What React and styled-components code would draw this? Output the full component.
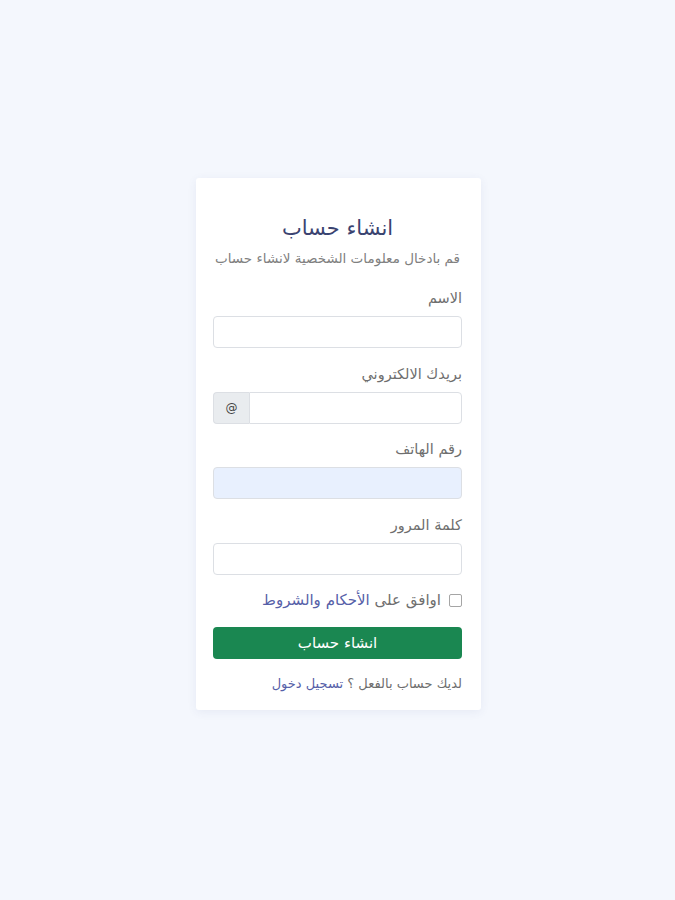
import React from "react";
import styled, { createGlobalStyle } from "styled-components";

const Global = createGlobalStyle`
  html, body { margin: 0; padding: 0; }
  body {
    background: #f4f7fd;
    font-family: "DejaVu Sans", "Noto Sans", sans-serif;
  }
  * { box-sizing: border-box; }
`;

const Page = styled.div`
  min-height: 900px;
  display: flex;
  justify-content: center;
  padding-top: 178px;
  padding-left: 2px;
`;

const Card = styled.form`
  width: 285px;
  height: 532px;
  background: #fff;
  box-shadow: 0 2px 10px rgba(60, 80, 140, 0.08);
  border-radius: 3px;
  padding: 36px 19px 0 17px;
  direction: rtl;
  display: flex;
  flex-direction: column;
`;

const Title = styled.h1`
  margin: 0;
  text-align: center;
  font-size: 21px;
  font-weight: 400;
  color: #3a4370;
  line-height: 28px;
`;

const Subtitle = styled.p`
  margin: 7px 0 22px;
  text-align: center;
  font-size: 13.5px;
  color: #808080;
  line-height: 18px;
  white-space: nowrap;
`;

const Field = styled.div`
  display: flex;
  flex-direction: column;
  margin-bottom: 16.5px;
`;

const Label = styled.label`
  font-size: 14.5px;
  color: #6e6e6e;
  line-height: 18px;
  margin-bottom: 9px;
`;

const Input = styled.input`
  height: 32px;
  width: 100%;
  border: 1px solid #dcdfe4;
  border-radius: 4px;
  background: ${(p) => (p.$filled ? "#e8f0fe" : "#fff")};
  padding: 0 10px;
  font-family: inherit;
  outline: none;
`;

const Group = styled.div`
  display: flex;
  direction: ltr;
  height: 32px;
`;

const Addon = styled.span`
  width: 36px;
  display: flex;
  align-items: center;
  justify-content: center;
  background: #e9ecef;
  border: 1px solid #dcdfe4;
  border-right: none;
  border-radius: 4px 0 0 4px;
  font-size: 12px;
  color: #444;
`;

const GroupInput = styled(Input)`
  flex: 1;
  border-radius: 0 4px 4px 0;
`;

const CheckRow = styled.div`
  display: flex;
  align-items: center;
  gap: 6px;
  font-size: 15px;
  color: #6e6e6e;
  line-height: 18px;
  white-space: nowrap;
`;

const Box = styled.span`
  width: 13px;
  height: 13px;
  border: 1px solid #a5a5a5;
  border-radius: 2px;
  margin-left: 2px;
`;

const Link = styled.a`
  color: #5660a8;
  text-decoration: none;
`;

const Button = styled.button`
  margin-top: 18px;
  height: 32px;
  width: 100%;
  border: none;
  border-radius: 4px;
  background: #1a8751;
  color: #fff;
  font-family: inherit;
  font-size: 15px;
`;

const Footer = styled.p`
  margin: 16px 0 0;
  font-size: 13px;
  color: #6e6e6e;
  line-height: 18px;
  white-space: nowrap;
`;

export default function App() {
  return (
    <>
      <Global />
      <Page>
        <Card>
          <Title>انشاء حساب</Title>
          <Subtitle>قم بادخال معلومات الشخصية لانشاء حساب</Subtitle>
          <Field>
            <Label>الاسم</Label>
            <Input />
          </Field>
          <Field>
            <Label>بريدك الالكتروني</Label>
            <Group>
              <Addon>@</Addon>
              <GroupInput />
            </Group>
          </Field>
          <Field>
            <Label>رقم الهاتف</Label>
            <Input $filled />
          </Field>
          <Field>
            <Label>كلمة المرور</Label>
            <Input type="password" />
          </Field>
          <CheckRow>
            <Box />
            <span>
              اوافق على <Link href="#">الأحكام والشروط</Link>
            </span>
          </CheckRow>
          <Button type="button">انشاء حساب</Button>
          <Footer>
            لديك حساب بالفعل ؟ <Link href="#">تسجيل دخول</Link>
          </Footer>
        </Card>
      </Page>
    </>
  );
}
